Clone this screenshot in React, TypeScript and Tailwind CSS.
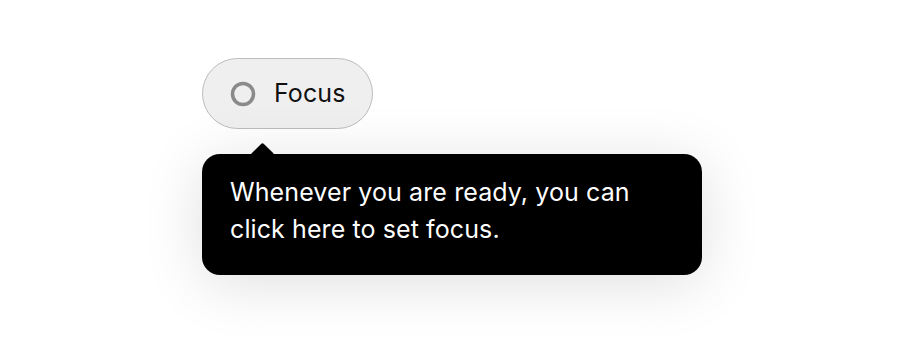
export default function App() {
  return (
    <div
      className="w-[920px] h-[340px] bg-white pt-[58px] pl-[202px]"
      style={{ fontFamily: 'Inter, "Liberation Sans", sans-serif' }}
    >
      <button
        type="button"
        className="flex items-center h-[71px] w-[171px] rounded-full border-[1.5px] border-[#bcbcbc] bg-[#efefef] pl-[27px] text-[25px] leading-none text-[#111] tracking-[0.1px]"
      >
        <svg width="26" height="26" viewBox="0 0 26 26" className="shrink-0">
          <circle cx="13" cy="13" r="10.5" fill="none" stroke="#8a8a8a" strokeWidth="3.5" />
        </svg>
        <span className="ml-[18px]">Focus</span>
      </button>
      <div className="relative mt-[25px] w-[500px] rounded-[18px] bg-black pl-[28px] pr-6 pt-5 pb-[27px] text-[25px] leading-[37px] text-white tracking-[0.1px] shadow-[0_8px_60px_rgba(0,0,0,0.13)]">
        <div className="absolute left-[51.5px] top-[-8.5px] h-[17px] w-[17px] rotate-45 rounded-[2px] bg-black" />
        <p className="relative">
          Whenever you are ready, you can
          <br />
          click here to set focus.
        </p>
      </div>
    </div>
  );
}
